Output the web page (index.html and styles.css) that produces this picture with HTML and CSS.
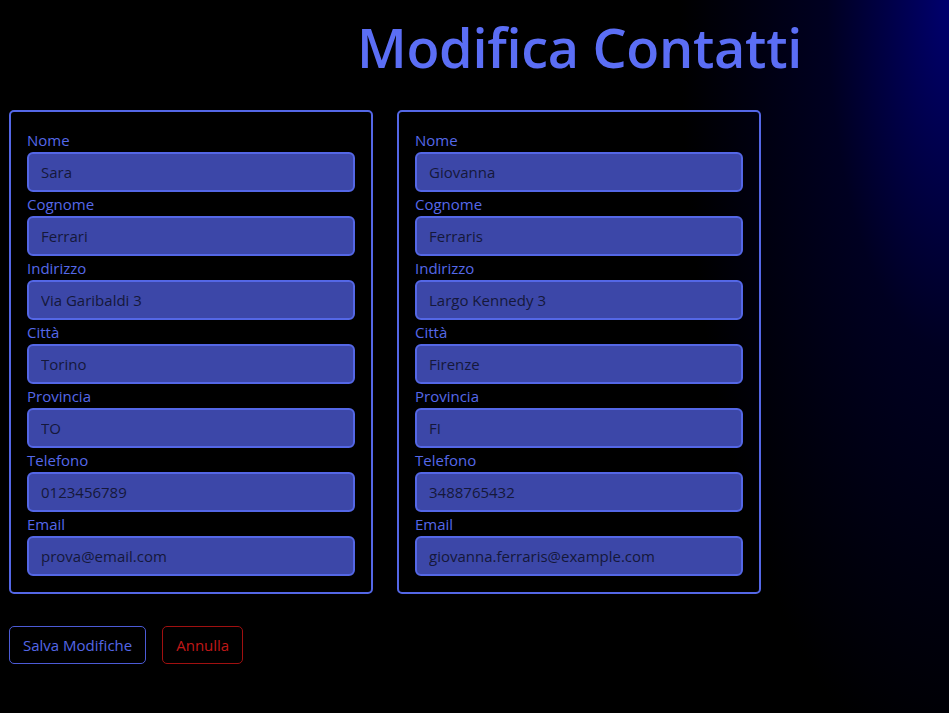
FILE: index.html
```html
<!DOCTYPE html>
<html lang="it">
<head>
<meta charset="utf-8">
<title>Modifica Contatti</title>
<link rel="stylesheet" href="styles.css">
</head>
<body>
<div class="page">
  <h1 class="title">Modifica Contatti</h1>
  <div class="cards">
    <form class="card">
      <label class="label">Nome</label>
      <input class="field" value="Sara">
      <label class="label">Cognome</label>
      <input class="field" value="Ferrari">
      <label class="label">Indirizzo</label>
      <input class="field" value="Via Garibaldi 3">
      <label class="label">Città</label>
      <input class="field" value="Torino">
      <label class="label">Provincia</label>
      <input class="field" value="TO">
      <label class="label">Telefono</label>
      <input class="field" value="0123456789">
      <label class="label">Email</label>
      <input class="field" value="prova@email.com">
    </form>
    <form class="card">
      <label class="label">Nome</label>
      <input class="field" value="Giovanna">
      <label class="label">Cognome</label>
      <input class="field" value="Ferraris">
      <label class="label">Indirizzo</label>
      <input class="field" value="Largo Kennedy 3">
      <label class="label">Città</label>
      <input class="field" value="Firenze">
      <label class="label">Provincia</label>
      <input class="field" value="FI">
      <label class="label">Telefono</label>
      <input class="field" value="3488765432">
      <label class="label">Email</label>
      <input class="field" value="giovanna.ferraris@example.com">
    </form>
  </div>
  <div class="actions">
    <button class="btn btn-save">Salva Modifiche</button>
    <button class="btn btn-cancel">Annulla</button>
  </div>
</div>
</body>
</html>
```
FILE: styles.css
```css
html, body {
  margin: 0;
  height: 100%;
}
body {
  background-color: #000;
  background-image: radial-gradient(ellipse 270px 780px at 100% 0%, #00006e 0%, rgba(0,0,55,0.6) 45%, rgba(0,0,0,0) 100%);
  background-repeat: no-repeat;
  font-family: "Open Sans", "Noto Sans", sans-serif;
  color: #5a6cf0;
}
.page {
  padding: 0 9px;
}
.title {
  margin: 0;
  padding: 14px 0 0 348px;
  height: 110px;
  box-sizing: border-box;
  font-size: 54px;
  font-weight: 600;
  line-height: 66px;
  color: #5b6ef5;
  letter-spacing: -0.3px;
}
.cards {
  display: flex;
  gap: 24px;
}
.card {
  width: 364px;
  box-sizing: border-box;
  border: 2px solid #5467e6;
  border-radius: 5px;
  padding: 16px;
  display: flex;
  flex-direction: column;
}
.label {
  font-size: 15px;
  line-height: 24px;
  color: #5568e8;
}
.field {
  height: 40px;
  box-sizing: border-box;
  border: 2px solid #5467e6;
  border-radius: 6px;
  background: #3c47a8;
  color: #15183a;
  font-family: inherit;
  font-size: 15px;
  padding: 0 12px;
  outline: none;
}
.actions {
  display: flex;
  gap: 16px;
  margin-top: 32px;
}
.btn {
  height: 38px;
  box-sizing: border-box;
  background: transparent;
  border-radius: 5px;
  font-family: inherit;
  font-size: 15px;
  padding: 0 13px;
}
.btn-save {
  border: 1px solid #4c5bd6;
  color: #5467e6;
}
.btn-cancel {
  border: 1px solid #a01010;
  color: #c01818;
}
```
